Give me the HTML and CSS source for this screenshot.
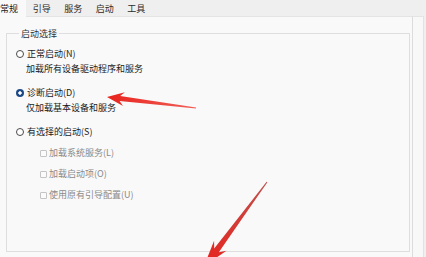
FILE: index.html
```html
<!DOCTYPE html>
<html lang="zh-CN">
<head>
<meta charset="utf-8">
<title>系统配置</title>
<link rel="stylesheet" href="styles.css">
</head>
<body>
<div class="window">
  <div class="tabs">
    <div class="tab tab-active">常规</div>
    <div class="tab">引导</div>
    <div class="tab">服务</div>
    <div class="tab">启动</div>
    <div class="tab">工具</div>
  </div>
  <div class="body">
    <div class="panel">
      <fieldset class="group">
        <legend class="group-title">启动选择</legend>
        <div class="options">
          <div class="option">
            <div class="radio-row"><span class="radio"></span><span class="label">正常启动(N)</span></div>
            <div class="desc">加载所有设备驱动程序和服务</div>
          </div>
          <div class="option">
            <div class="radio-row"><span class="radio radio-on"></span><span class="label">诊断启动(D)</span></div>
            <div class="desc">仅加载基本设备和服务</div>
          </div>
          <div class="option">
            <div class="radio-row"><span class="radio"></span><span class="label">有选择的启动(S)</span></div>
            <div class="checks">
              <div class="check-row"><span class="check"></span><span class="check-label">加载系统服务(L)</span></div>
              <div class="check-row"><span class="check"></span><span class="check-label">加载启动项(O)</span></div>
              <div class="check-row"><span class="check"></span><span class="check-label">使用原有引导配置(U)</span></div>
            </div>
          </div>
        </div>
      </fieldset>
    </div>
    <div class="edge"></div>
  </div>
</div>
<svg class="annotations" width="426" height="257" viewBox="0 0 426 257">
  <defs>
    <linearGradient id="red1" x1="0" y1="0" x2="1" y2="0">
      <stop offset="0" stop-color="#e8231d"/>
      <stop offset="1" stop-color="#f06058"/>
    </linearGradient>
    <linearGradient id="red2" x1="0" y1="1" x2="1" y2="0">
      <stop offset="0" stop-color="#e8231d"/>
      <stop offset="1" stop-color="#c0504c"/>
    </linearGradient>
  </defs>
  <polygon fill="url(#red1)" points="107,97 124.8,92.2 120.2,96.1 196.1,107.5 195.9,108.5 119.6,101.1 123,106"/>
  <polygon fill="url(#red2)" points="204,266 226.5,250.8 218.8,252.3 267.4,182.3 266.6,181.7 214.2,248.5 214.1,240.7"/>
</svg>
</body>
</html>
```
FILE: styles.css
```css
html, body {
  margin: 0;
  padding: 0;
}
body {
  width: 426px;
  height: 257px;
  overflow: hidden;
  background: #f0efef;
  font-family: "Noto Sans CJK SC", "Noto Sans", sans-serif;
  font-size: 9px;
  color: #1b1b1b;
  position: relative;
}
.window {
  display: flex;
  flex-direction: column;
  height: 257px;
}
.tabs {
  display: flex;
  height: 16px;
  flex: none;
}
.tab {
  width: 31.5px;
  height: 16px;
  line-height: 17px;
  text-align: center;
  color: #2a2a2a;
  box-sizing: border-box;
}
.tab-active {
  width: 26px;
  text-align: left;
  height: 17px;
  margin-bottom: -1px;
  background: #f9f9f9;
  color: #1b1b1b;
  position: relative;
  z-index: 1;
}
.body {
  flex: 1;
  display: flex;
}
.panel {
  width: 413px;
  box-sizing: border-box;
  background: #f9f9f9;
  border-top: 1px solid #e4e4e4;
  border-right: 1px solid #dcdcdc;
  padding: 11px 2px 5px 6px;
  display: flex;
  flex-direction: column;
}
.edge {
  flex: 1;
  background: #f8f8f8;
  border-top: 1px solid #e4e4e4;
  border-right: 1px solid #e2e2e2;
  margin-right: 2px;
}
.group {
  flex: 1;
  margin: 0;
  padding: 9px 0 0 9px;
  border: 1px solid #dedede;
  min-width: 0;
}
.group-title {
  margin-left: 3px;
  padding: 0 2px;
  line-height: 11px;
  color: #333;
}
.options {
  display: flex;
  flex-direction: column;
  gap: 12px;
}
.option {
  display: flex;
  flex-direction: column;
}
.radio-row {
  display: flex;
  align-items: center;
  height: 12px;
  line-height: 12px;
}
.radio {
  width: 8px;
  height: 8px;
  box-sizing: border-box;
  border: 1px solid #4a4a4a;
  border-radius: 50%;
  background: #fff;
  margin-right: 3px;
  flex: none;
}
.radio-on {
  border: none;
  background: radial-gradient(circle, #ffffff 0 1.4px, #1d4a86 2px);
}
.desc {
  margin-top: 3px;
  margin-left: 10px;
  height: 12px;
  line-height: 12px;
}
.checks {
  display: flex;
  flex-direction: column;
  gap: 9px;
  padding-top: 9px;
  padding-left: 24px;
}
.check-row {
  display: flex;
  align-items: center;
  height: 12px;
  line-height: 12px;
}
.check {
  width: 7px;
  height: 7px;
  box-sizing: border-box;
  border: 1px solid #c4c4c4;
  border-radius: 1px;
  background: #fbfbfb;
  margin-right: 2px;
  flex: none;
}
.check-label {
  color: #8a8a8a;
}
.annotations {
  position: absolute;
  left: 0;
  top: 0;
  pointer-events: none;
}
```
